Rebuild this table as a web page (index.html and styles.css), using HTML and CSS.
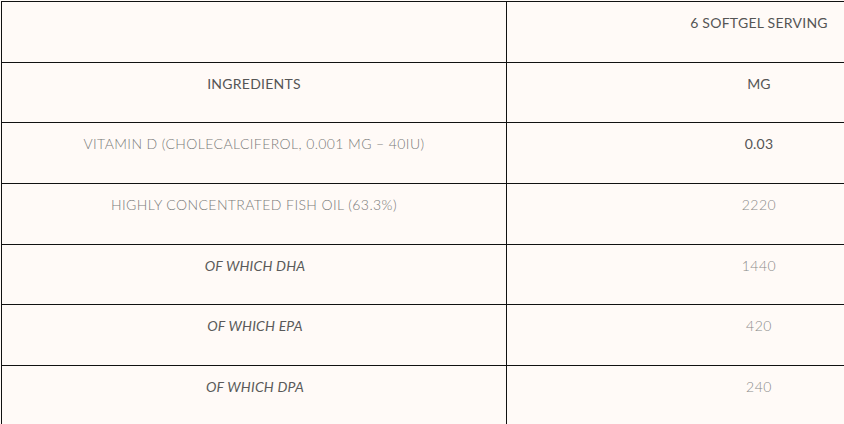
FILE: index.html
```html
<!DOCTYPE html>
<html>
<head>
<meta charset="utf-8">
<link rel="stylesheet" href="styles.css">
</head>
<body>
<div class="wrap">
<table class="facts">
  <tr><td></td><td class="head">6 SOFTGEL SERVING</td></tr>
  <tr><td class="head">INGREDIENTS</td><td class="head">MG</td></tr>
  <tr><td class="light">VITAMIN D (CHOLECALCIFEROL, 0.001 MG – 40IU)</td><td class="head">0.03</td></tr>
  <tr><td class="light">HIGHLY CONCENTRATED FISH OIL (63.3%)</td><td class="num">2220</td></tr>
  <tr><td class="sub">OF WHICH DHA</td><td class="num">1440</td></tr>
  <tr><td class="sub">OF WHICH EPA</td><td class="num">420</td></tr>
  <tr><td class="sub">OF WHICH DPA</td><td class="num">240</td></tr>
</table>
</div>
</body>
</html>
```
FILE: styles.css
```css
html, body {
  margin: 0;
  padding: 0;
  background: #fffaf7;
  overflow: hidden;
}
.wrap {
  padding: 1px 0 0 1px;
  width: 1100px;
}
.facts {
  border-collapse: collapse;
  width: 1011px;
  table-layout: fixed;
  font-family: "Lato", "Liberation Sans", sans-serif;
  font-size: 14px;
}
.facts td {
  border: 1px solid #111;
  width: 50%;
  height: 60.67px;
  box-sizing: border-box;
  padding: 10px 8px 0;
  line-height: 22px;
  vertical-align: top;
  text-align: center;
}
.head {
  color: #555;
  letter-spacing: 0.25px;
}
.light {
  color: #7a7a7a;
  font-weight: 300;
  letter-spacing: 0.4px;
}
.facts td.sub {
  color: #5a5a5a;
  font-style: italic;
  letter-spacing: 0.2px;
  padding-left: 10px;
}
.num {
  color: #8a8a8a;
  font-weight: 300;
  letter-spacing: 0.5px;
}
```
